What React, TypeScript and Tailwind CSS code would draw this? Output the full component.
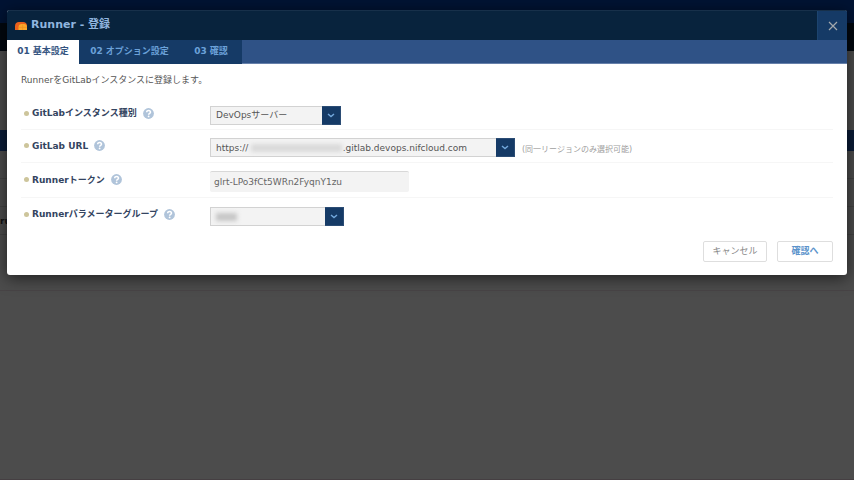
import { useState } from "react";
import type { ReactNode } from "react";

interface FieldProps {
  id: string;
  label: string;
  className: string;
  children: ReactNode;
}

interface SelectBoxProps {
  id: string;
  value: string;
  className: string;
  children?: ReactNode;
}

const STEPS = ["01 基本設定", "02 オプション設定", "03 確認"];

const REGION_URL = `https://${"\u00a0".repeat(33)}.gitlab.devops.nifcloud.com`;

function RunnerIcon() {
  return (
    <svg viewBox="0 0 12 9" className="h-[9px] w-3 shrink-0" aria-hidden="true">
      <path d="M0 9V5C0 2.5 1.6 1 4 1h4c2.4 0 4 1.5 4 4v4z" fill="#e9601c" />
      <path d="M3.5 9V6A3.2 3.2 0 0 1 6.7 3H9a3 3 0 0 1 3 3v3z" fill="#fba82a" />
      <path d="M7.6 3.5V9M3.5 6.4H12" stroke="#f08a1c" strokeWidth=".6" />
    </svg>
  );
}

function HelpButton({ label }: { label: string }) {
  return (
    <button type="button" aria-label={`${label}のヘルプ`} className="ml-1.5 shrink-0">
      <svg viewBox="0 0 11 11" className="size-[11px]" aria-hidden="true">
        <circle cx="5.5" cy="5.5" r="5.4" fill="#b0c4da" />
        <path
          d="M3.7 4.2c0-2.3 3.8-2.2 3.8 0 0 1.2-1.9 1.2-1.9 2.5"
          fill="none"
          stroke="#fff"
          strokeWidth="1.5"
        />
        <circle cx="5.6" cy="8.4" r=".9" fill="#fff" />
      </svg>
    </button>
  );
}

function Field({ id, label, className, children }: FieldProps) {
  return (
    <div className={`flex items-center border-[#f6f6f6] pt-[3px] ${className}`}>
      <div className="flex w-[189px] shrink-0 items-center pb-1 pl-[3px]">
        <span className="mr-[3px] size-[5px] shrink-0 rounded-full bg-[#cdc59b]" />
        <label htmlFor={id} className="text-[9px] leading-4 font-bold whitespace-nowrap text-[#34445f]">
          {label}
        </label>
        <HelpButton label={label} />
      </div>
      {children}
    </div>
  );
}

function SelectBox({ id, value, className, children }: SelectBoxProps) {
  return (
    <div className={`relative flex h-[19px] ${className}`}>
      <select
        id={id}
        className="w-full appearance-none border border-[#d2d2d2] bg-[#f3f3f3] pr-5 pl-[5px] text-[9px] leading-4 text-[#555]"
      >
        <option>{value}</option>
      </select>
      <span className="pointer-events-none absolute inset-y-0 right-0 flex w-[19px] items-center justify-center border border-l-0 border-[#2b4c74] bg-[#153a66]">
        <svg viewBox="0 0 8 5" className="h-[5px] w-2" fill="none" aria-hidden="true">
          <path d="M1 1l3 2.6L7 1" stroke="#72a7dc" strokeWidth="1.4" />
        </svg>
      </span>
      {children}
    </div>
  );
}

export default function App() {
  const [step, setStep] = useState(0);
  const [token, setToken] = useState("glrt-LPo3fCt5WRn2FyqnY1zu");

  return (
    <div className="relative min-h-screen overflow-hidden bg-[#4c4c4c] font-['DejaVu_Sans','Noto_Sans_CJK_JP',sans-serif]">
      {/* 背面のページ */}
      <div className="absolute inset-0 flex flex-col">
        <div className="h-[23px] bg-[#001333]" />
        <div className="h-7 bg-[#02080f]" />
        <div className="h-[79px]" />
        <div className="h-[21px] bg-[#0b1c38]" />
        <div className="h-7 border-b border-[#434343]" />
        <div className="h-7 border-b border-[#434343]" />
        <div className="h-7 border-b border-[#434343] text-[9px] leading-7 font-bold text-[#111]">ru</div>
        <div className="h-14 border-b border-[#484446]" />
        <div className="mt-auto h-px bg-[#453f42]" />
      </div>

      {/* ダイアログ */}
      <div
        role="dialog"
        aria-labelledby="dialog-title"
        className="relative mx-[7px] mt-[10px] overflow-hidden rounded-[3px] bg-white shadow-[0_3px_16px_rgba(0,0,0,0.6)]"
      >
        <header className="flex h-[30px] items-center border-t border-[#17304a] bg-[#08233d] pl-2">
          <RunnerIcon />
          <h1 id="dialog-title" className="ml-1 text-[11px] font-bold text-[#90b5df]">
            Runner - 登録
          </h1>
          <button
            type="button"
            aria-label="閉じる"
            className="ml-auto flex h-full w-[30px] items-center justify-center border-l border-[#1c446f] bg-[#153a66]"
          >
            <svg viewBox="0 0 10 10" className="size-[10px]" fill="none" aria-hidden="true">
              <path d="M1 1l8 8M9 1L1 9" stroke="#a3a9ad" strokeWidth="1.2" />
            </svg>
          </button>
        </header>

        <nav className="flex h-6 border-b border-[#6680aa] bg-[#2f5286]">
          {STEPS.map((name, i) => (
            <button
              key={name}
              type="button"
              onClick={() => setStep(i)}
              className={`h-6 text-[9px] font-bold whitespace-nowrap ${
                i === 0 ? "w-[72px]" : i === 1 ? "w-[101px]" : "w-[62px]"
              } ${i === step ? "bg-white text-[#34547f]" : "bg-[#153a66] text-[#6ba1d9]"}`}
            >
              {name}
            </button>
          ))}
        </nav>

        <form className="px-[14px] pb-[13px]" onSubmit={(e) => e.preventDefault()}>
          <p className="pt-2 text-[9px] leading-4 text-[#555]">RunnerをGitLabインスタンスに登録します。</p>

          <div className="mt-[10px]">
            <Field id="kind" label="GitLabインスタンス種別" className="h-8 border-b">
              <SelectBox id="kind" value="DevOpsサーバー" className="w-[131px]" />
            </Field>

            <Field id="url" label="GitLab URL" className="h-[33px] border-b">
              <SelectBox id="url" value={REGION_URL} className="w-[305px]">
                <span className="pointer-events-none absolute top-[6px] left-[41px] h-2 w-[91px] bg-[#d9d9d9] blur-[2px]" />
              </SelectBox>
              <span className="ml-[7px] pt-1 text-[8px] text-[#a0a0a0]">(同一リージョンのみ選択可能)</span>
            </Field>

            <Field id="token" label="Runnerトークン" className="h-[35px] border-b">
              <input
                id="token"
                type="text"
                value={token}
                onChange={(e) => setToken(e.target.value)}
                className="h-[21px] w-[199px] rounded-[2px] border-t border-[#d8d8d8] bg-[#f3f3f3] px-1 text-[9px] text-[#666]"
              />
            </Field>

            <Field id="group" label="Runnerパラメーターグループ" className="h-[33px]">
              <SelectBox id="group" value="" className="w-[134px]">
                <span className="pointer-events-none absolute top-[6px] left-[6px] h-2 w-[21px] bg-[#c6c6c6] blur-[2px]" />
              </SelectBox>
            </Field>
          </div>

          <div className="mt-[10px] flex justify-end gap-[10px]">
            <button
              type="button"
              className="h-[21px] w-16 rounded-[2px] border border-[#dedede] bg-white text-[9px] text-[#888]"
            >
              キャンセル
            </button>
            <button
              type="submit"
              className="h-[21px] w-14 rounded-[2px] border border-[#dedede] bg-white text-[9px] font-bold text-[#5b93cb]"
            >
              確認へ
            </button>
          </div>
        </form>
      </div>
    </div>
  );
}
